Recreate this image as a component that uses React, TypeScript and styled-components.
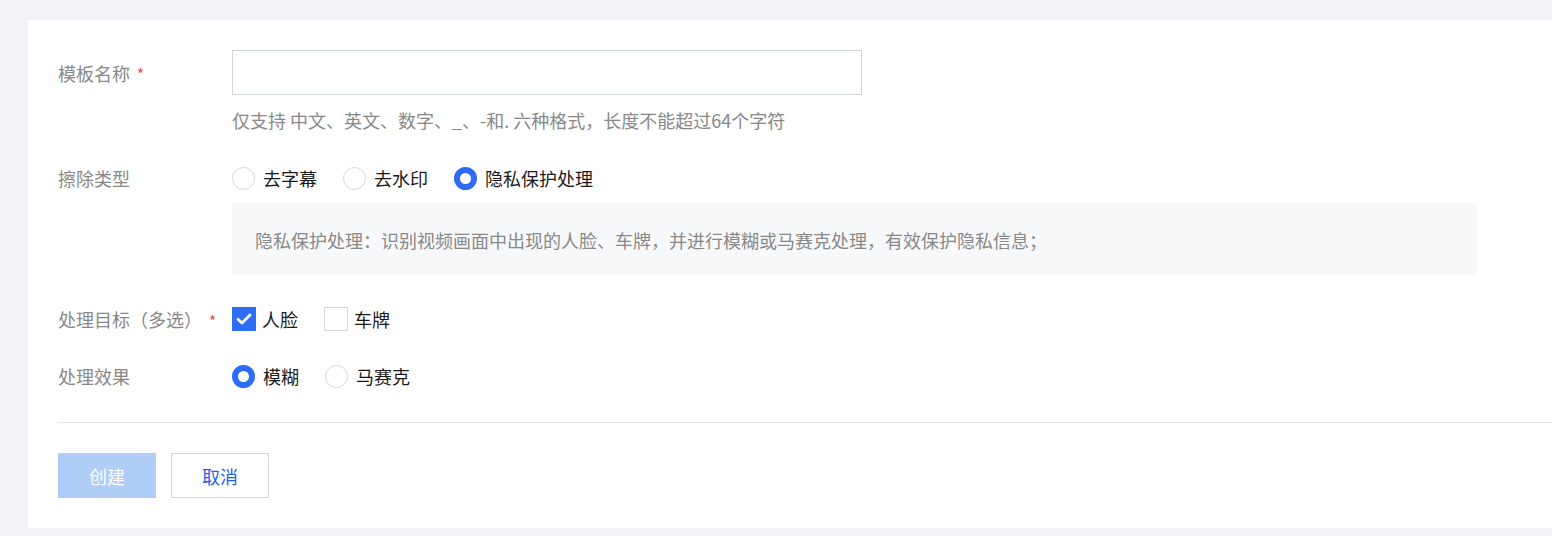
import React, { useState } from "react";
import styled, { createGlobalStyle } from "styled-components";

const Global = createGlobalStyle`
  html, body { margin: 0; padding: 0; background: #f2f3f7; overflow: hidden; }
  body { font-family: "Noto Sans CJK SC", "Noto Sans", sans-serif; }
  * { box-sizing: border-box; }
`;

const Page = styled.div`
  width: 1552px;
  height: 536px;
  padding: 20px 0 0 28px;
  overflow: hidden;
`;

const Card = styled.div`
  width: 1600px;
  background: #fff;
  padding: 30px 0 30px 30px;
`;

const Row = styled.div<{ $mb: number }>`
  display: flex;
  align-items: flex-start;
  margin-bottom: ${(p) => p.$mb}px;
`;

const Label = styled.div<{ $h: number }>`
  width: 174px;
  flex: none;
  height: ${(p) => p.$h}px;
  display: flex;
  align-items: center;
  font-size: 18px;
  color: #888;
`;

const Required = styled.span`
  color: #e54545;
  margin-left: 7px;
  font-size: 15px;
  position: relative;
  top: 1px;
`;

const Control = styled.div`
  display: flex;
  flex-direction: column;
`;

const Input = styled.input`
  width: 630px;
  height: 45px;
  border: 1px solid #cfd3dc;
  outline: none;
  padding: 0 12px;
  font-size: 18px;
  font-family: inherit;
  margin: 0;
`;

const Help = styled.div`
  margin-top: 13px;
  font-size: 18px;
  line-height: 24px;
  color: #888;
`;

const Group = styled.div`
  display: flex;
  align-items: center;
  height: 24px;
`;

const Option = styled.label`
  display: flex;
  align-items: center;
  font-size: 18px;
  color: #1a1a1a;
  margin-right: 26px;
  cursor: pointer;
`;

const RadioDot = styled.span<{ $on: boolean }>`
  width: 23px;
  height: 23px;
  border-radius: 50%;
  flex: none;
  border: ${(p) => (p.$on ? "6px solid #2c6cf6" : "1px solid #d3d6de")};
  background: #fff;
  margin-right: 8px;
`;

const CheckBox = styled.span<{ $on: boolean }>`
  width: 24px;
  height: 24px;
  flex: none;
  display: flex;
  align-items: center;
  justify-content: center;
  background: ${(p) => (p.$on ? "#2c6cf6" : "#fff")};
  border: ${(p) => (p.$on ? "none" : "1px solid #d3d6de")};
  margin-right: 6px;
`;

const Desc = styled.div`
  margin-top: 13px;
  width: 1245px;
  height: 72px;
  background: #f7f8fa;
  padding: 25px 23px 0;
  font-size: 18px;
  line-height: 24px;
  color: #888;
`;

const Divider = styled.div`
  height: 1px;
  background: #e3e4e8;
  margin-bottom: 30px;
`;

const Actions = styled.div`
  display: flex;
  gap: 15px;
`;

const Button = styled.button<{ $primary?: boolean }>`
  width: 98px;
  height: 45px;
  font-family: inherit;
  font-size: 18px;
  margin: 0;
  cursor: pointer;
  background: ${(p) => (p.$primary ? "#b0cdf8" : "#fff")};
  color: ${(p) => (p.$primary ? "#fff" : "#1f63e8")};
  border: ${(p) => (p.$primary ? "none" : "1px solid #cfd3dc")};
`;

const Radio = ({ on, label, onClick }: { on: boolean; label: string; onClick: () => void }) => (
  <Option onClick={onClick}>
    <RadioDot $on={on} />
    {label}
  </Option>
);

const Check = ({ on, label, onClick }: { on: boolean; label: string; onClick: () => void }) => (
  <Option onClick={onClick}>
    <CheckBox $on={on}>
      {on && (
        <svg width="18" height="18" viewBox="0 0 18 18">
          <path d="M3 9.2 L7 13 L15 5" fill="none" stroke="#fff" strokeWidth="2.8" strokeLinecap="round" strokeLinejoin="round" />
        </svg>
      )}
    </CheckBox>
    {label}
  </Option>
);

export default function App() {
  const [type, setType] = useState(2);
  const [face, setFace] = useState(true);
  const [plate, setPlate] = useState(false);
  const [effect, setEffect] = useState(0);
  return (
    <Page>
      <Global />
      <Card>
        <Row $mb={34}>
          <Label $h={45}>
            模板名称<Required>*</Required>
          </Label>
          <Control>
            <Input />
            <Help>仅支持 中文、英文、数字、_、-和. 六种格式，长度不能超过64个字符</Help>
          </Control>
        </Row>
        <Row $mb={32}>
          <Label $h={24}>擦除类型</Label>
          <Control>
            <Group>
              {["去字幕", "去水印", "隐私保护处理"].map((t, i) => (
                <Radio key={t} on={type === i} label={t} onClick={() => setType(i)} />
              ))}
            </Group>
            <Desc>隐私保护处理：识别视频画面中出现的人脸、车牌，并进行模糊或马赛克处理，有效保护隐私信息；</Desc>
          </Control>
        </Row>
        <Row $mb={33}>
          <Label $h={24}>
            处理目标（多选）<Required>*</Required>
          </Label>
          <Group>
            <Check on={face} label="人脸" onClick={() => setFace(!face)} />
            <Check on={plate} label="车牌" onClick={() => setPlate(!plate)} />
          </Group>
        </Row>
        <Row $mb={34}>
          <Label $h={24}>处理效果</Label>
          <Group>
            {["模糊", "马赛克"].map((t, i) => (
              <Radio key={t} on={effect === i} label={t} onClick={() => setEffect(i)} />
            ))}
          </Group>
        </Row>
        <Divider />
        <Actions>
          <Button $primary>创建</Button>
          <Button>取消</Button>
        </Actions>
      </Card>
    </Page>
  );
}
